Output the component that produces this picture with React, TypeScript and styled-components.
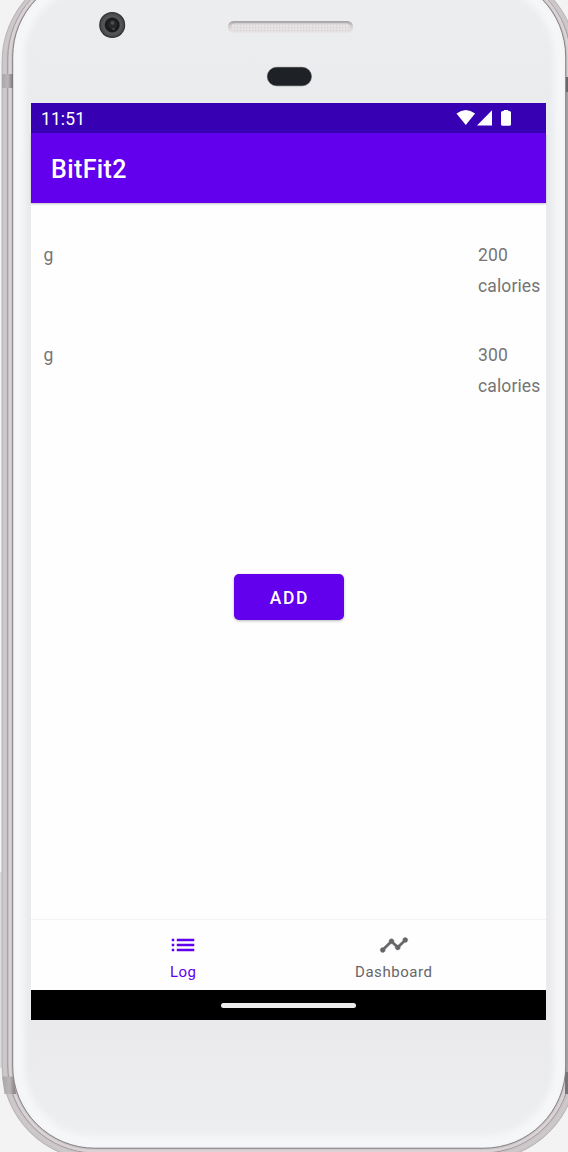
import React from "react";
import styled, { createGlobalStyle } from "styled-components";

const GlobalStyle = createGlobalStyle`
  * { box-sizing: border-box; }
  html, body { margin: 0; padding: 0; background: #f3f3f4; overflow: hidden; }
  body { font-family: Roboto, "Liberation Sans", sans-serif; }
`;

const Device = styled.div`
  position: relative;
  width: 568px;
  height: 1152px;
  overflow: hidden;
  padding: 103px 22px 132px 31px;
`;

const ShellDrawing = styled.svg`
  position: absolute;
  left: 0;
  top: 0;
`;

const Screen = styled.main`
  position: relative;
  display: flex;
  flex-direction: column;
  width: 515px;
  height: 917px;
  background: #fefefe;
`;

const StatusBar = styled.div`
  flex: none;
  display: flex;
  justify-content: space-between;
  height: 30px;
  padding: 0 34px 0 10px;
  background: #3700b3;
  color: #fff;
`;

const Clock = styled.span`
  font-size: 17.5px;
  line-height: 32px;
  letter-spacing: 0.1px;
`;

const AppBar = styled.header`
  flex: none;
  height: 70px;
  padding: 0 20px;
  background: #6200ee;
  color: #fff;
  box-shadow: 0 1px 2px rgba(0, 0, 0, 0.25);
`;

const Title = styled.h1`
  margin: 0;
  font-size: 25px;
  font-weight: 500;
  line-height: 74px;
  letter-spacing: 0.4px;
`;

const Content = styled.section`
  flex: 1;
  display: flex;
  flex-direction: column;
  padding-top: 37px;
`;

const LogList = styled.div`
  height: 334px;
`;

const LogRow = styled.div`
  display: flex;
  justify-content: space-between;
  height: 100px;
  padding: 0 5px 0 12.5px;
  color: #757575;
  font-size: 17.5px;
  line-height: 31px;
  letter-spacing: 0.12px;
`;

const Calories = styled.div`
  display: flex;
  flex-direction: column;
  width: 63px;
`;

const AddButton = styled.button`
  align-self: center;
  width: 110px;
  height: 46px;
  padding: 1px 0 0 2px;
  border: 0;
  border-radius: 5px;
  background: #6200ee;
  color: #fff;
  font: 500 17.5px/46px Roboto, "Liberation Sans", sans-serif;
  letter-spacing: 1.6px;
  box-shadow: 0 1px 3px rgba(0, 0, 0, 0.28);
`;

const BottomNav = styled.nav`
  flex: none;
  display: flex;
  justify-content: center;
  height: 71px;
  border-top: 1px solid #f3f3f3;
  background: #fefefe;
`;

const NavItem = styled.div<{ $active?: boolean }>`
  display: flex;
  flex-direction: column;
  align-items: center;
  width: 210.5px;
  padding-top: 10px;
  color: ${(p) => (p.$active ? "#6200ee" : "#676569")};
  font-size: 15px;
  line-height: 24px;
  letter-spacing: 0.55px;
`;

const GestureBar = styled.div`
  flex: none;
  display: flex;
  align-items: center;
  justify-content: center;
  height: 30px;
  background: #000;
`;

const GesturePill = styled.div`
  width: 135px;
  height: 5px;
  border-radius: 3px;
  background: #ececec;
`;

function Shell() {
  return (
    <ShellDrawing width="568" height="1152" viewBox="0 0 568 1152" aria-hidden="true">
      <defs>
        <linearGradient id="face" x1="0" y1="0" x2="0" y2="1">
          <stop offset="0" stopColor="#edeef0" />
          <stop offset="0.15" stopColor="#e9eaec" />
          <stop offset="0.9" stopColor="#eaeaec" />
          <stop offset="1" stopColor="#eeeff1" />
        </linearGradient>
        <linearGradient id="grille" x1="0" y1="0" x2="0" y2="1">
          <stop offset="0" stopColor="#a49fa2" />
          <stop offset="0.35" stopColor="#cdc8ca" />
          <stop offset="0.6" stopColor="#ddd8da" />
          <stop offset="1" stopColor="#ebe6e8" />
        </linearGradient>
        <linearGradient id="antenna" x1="0" y1="0" x2="1" y2="0">
          <stop offset="0" stopColor="#aaa6a9" />
          <stop offset="0.55" stopColor="#bab6b8" />
          <stop offset="1" stopColor="#7d797c" />
        </linearGradient>
        <radialGradient id="lens">
          <stop offset="0" stopColor="#1c1d20" />
          <stop offset="0.52" stopColor="#1a1a1c" />
          <stop offset="0.62" stopColor="#57585a" />
          <stop offset="0.85" stopColor="#4c4c4e" />
          <stop offset="1" stopColor="#252527" />
        </radialGradient>
        <pattern id="mesh" width="3" height="3" patternUnits="userSpaceOnUse">
          <rect width="1.2" height="1.2" fill="#b9b4b6" fillOpacity="0.4" />
        </pattern>
        <filter id="soften" x="-5%" y="-5%" width="110%" height="110%">
          <feGaussianBlur stdDeviation="3" />
        </filter>
        <clipPath id="faceClip">
          <rect x="13" y="-25" width="552.5" height="1173" rx="82" />
        </clipPath>
      </defs>
      <rect x="0" y="872" width="3" height="196" fill="#dedbdd" />
      <rect x="2" y="-33" width="575" height="1193" rx="95" fill="#c9c3c6" stroke="#b0abae" strokeWidth="0.8" />
      <rect x="4.5" y="-30.5" width="570" height="1187" rx="92" fill="none" stroke="#cdc8ca" strokeWidth="3" />
      <rect x="7.7" y="-29" width="563" height="1182" rx="88" fill="none" stroke="#9c9699" strokeWidth="0.9" />
      <rect x="10" y="-27.5" width="558.5" height="1178.5" rx="85" fill="none" stroke="#d9d3d6" strokeWidth="2.4" />
      <rect x="2" y="74" width="11" height="14" fill="url(#antenna)" />
      <path d="M2 1076.5H13L16 1094H4.5Z" fill="url(#antenna)" />
      <rect x="565" y="77" width="3" height="15" fill="#696669" />
      <rect x="565" y="92" width="3" height="980" fill="#a5a0a3" />
      <rect x="565" y="1072" width="3" height="22" fill="#777376" />
      <rect x="13" y="-25" width="552.5" height="1173" rx="82" fill="url(#face)" />
      <g clipPath="url(#faceClip)">
        <rect x="18" y="-20" width="542.5" height="1163" rx="77" fill="none" stroke="#f6f7f9" strokeWidth="13" filter="url(#soften)" />
      </g>
      <rect x="12.7" y="-25.3" width="553" height="1173.5" rx="82" fill="none" stroke="#7e787b" strokeWidth="0.9" />
      <circle cx="112.2" cy="25" r="13" fill="url(#lens)" />
      <circle cx="112.5" cy="24.5" r="4.7" fill="#26282b" />
      <circle cx="112.5" cy="23" r="1.8" fill="#505257" />
      <circle cx="113.5" cy="29" r="1.3" fill="#45474a" />
      <rect x="228" y="21" width="125" height="12" rx="5.5" fill="url(#grille)" />
      <rect x="231" y="23.5" width="119" height="8.5" rx="4" fill="#e6e1e3" />
      <rect x="231" y="23.5" width="119" height="8.5" rx="4" fill="url(#mesh)" />
      <rect x="267.3" y="67.3" width="44.2" height="18.5" rx="9.2" fill="#1e2226" stroke="#403e43" strokeWidth="0.5" />
    </ShellDrawing>
  );
}

const StatusIcons = () => (
  <svg width="56" height="30" viewBox="456 103 56 30" fill="#fff" aria-hidden="true">
    <path d="M456.5 113.6Q465.8 106.4 475.1 113.6L465.8 125Z" />
    <path d="M477 125.4L492 110.2V125.4Z" />
    <path d="M503.8 111V110H508.2V111H509.3Q511 111 511 112.6V124.2Q511 125.8 509.3 125.8H502.7Q501 125.8 501 124.2V112.6Q501 111 502.7 111Z" />
  </svg>
);

const ListIcon = () => (
  <svg width="30" height="30" viewBox="0 0 24 24" fill="currentColor" aria-hidden="true">
    <path d="M3 13h2v-2H3v2zm0 4h2v-2H3v2zm0-8h2V7H3v2zm4 4h14v-2H7v2zm0 4h14v-2H7v2zM7 7v2h14V7H7z" />
  </svg>
);

const TimelineIcon = () => (
  <svg width="30" height="30" viewBox="0 0 24 24" fill="currentColor" stroke="currentColor" strokeWidth="0.3" aria-hidden="true">
    <path d="M23 8c0 1.1-.9 2-2 2-.18 0-.35-.02-.51-.07l-3.56 3.55c.05.16.07.34.07.52 0 1.1-.9 2-2 2s-2-.9-2-2c0-.18.02-.36.07-.52l-2.55-2.55c-.16.05-.34.07-.52.07s-.36-.02-.52-.07l-4.55 4.56c.05.16.07.33.07.51 0 1.1-.9 2-2 2s-2-.9-2-2 .9-2 2-2c.18 0 .35.02.51.07l4.56-4.55C8.02 9.36 8 9.18 8 9c0-1.1.9-2 2-2s2 .9 2 2c0 .18-.02.36-.07.52l2.55 2.55c.16-.05.34-.07.52-.07s.36.02.52.07l3.55-3.56C19.02 8.35 19 8.18 19 8c0-1.1.9-2 2-2s2 .9 2 2z" />
  </svg>
);

const entries = [
  { food: "g", calories: 200 },
  { food: "g", calories: 300 },
];

export default function App() {
  return (
    <>
      <GlobalStyle />
      <Device>
        <Shell />
        <Screen>
          <StatusBar>
            <Clock>11:51</Clock>
            <StatusIcons />
          </StatusBar>
          <AppBar>
            <Title>BitFit2</Title>
          </AppBar>
          <Content>
            <LogList>
              {entries.map((entry) => (
                <LogRow key={entry.calories}>
                  <span>{entry.food}</span>
                  <Calories>
                    <span>{entry.calories}</span>
                    <span>calories</span>
                  </Calories>
                </LogRow>
              ))}
            </LogList>
            <AddButton>ADD</AddButton>
          </Content>
          <BottomNav>
            <NavItem $active>
              <ListIcon />
              <span>Log</span>
            </NavItem>
            <NavItem>
              <TimelineIcon />
              <span>Dashboard</span>
            </NavItem>
          </BottomNav>
          <GestureBar>
            <GesturePill />
          </GestureBar>
        </Screen>
      </Device>
    </>
  );
}
